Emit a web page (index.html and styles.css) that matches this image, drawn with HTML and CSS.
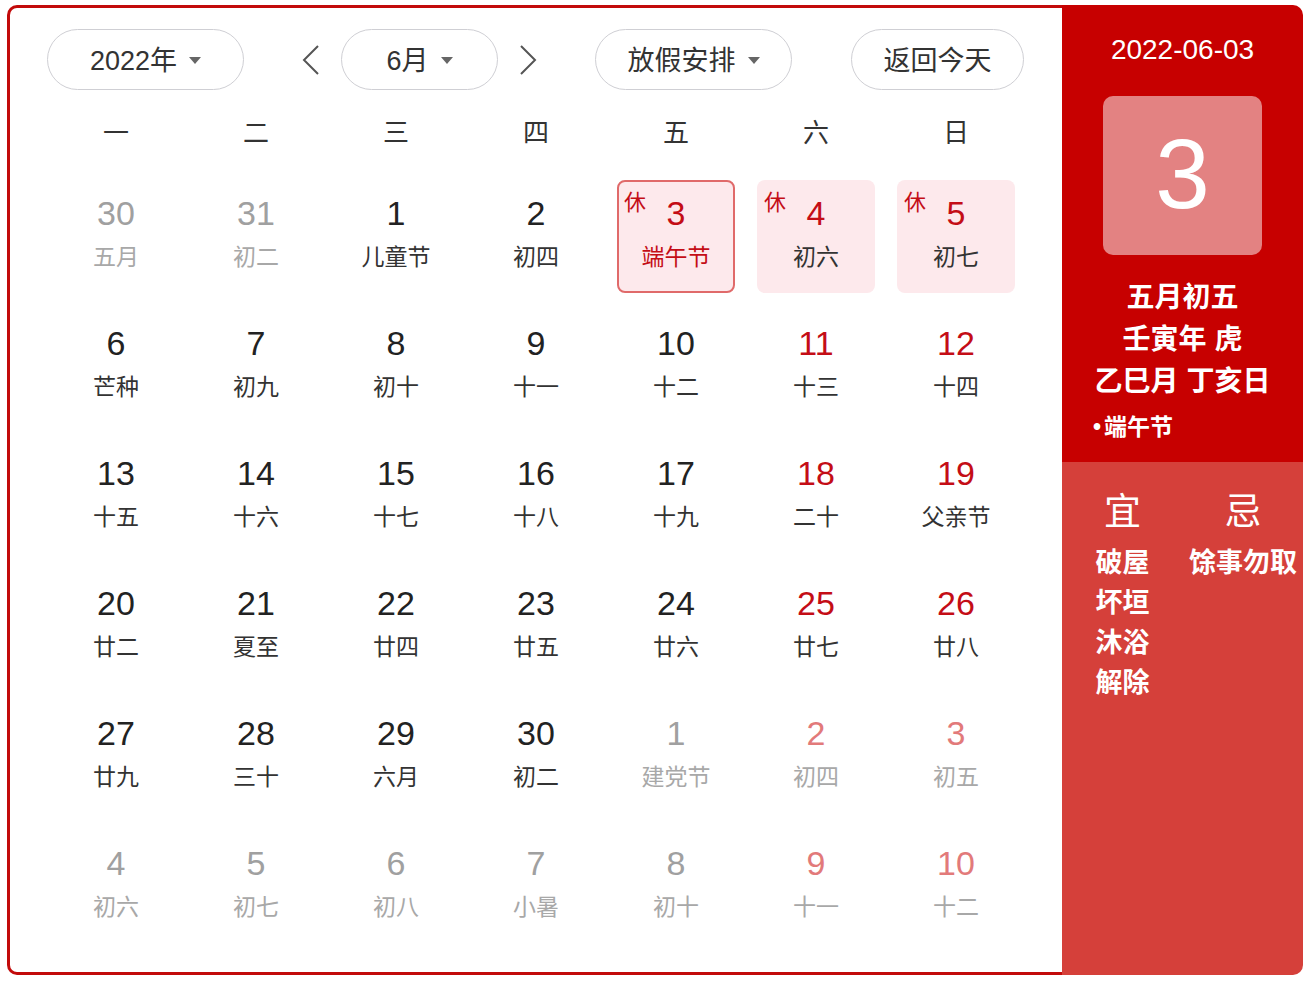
FILE: index.html
```html
<!DOCTYPE html>
<html lang="zh">
<head>
<meta charset="utf-8">
<link rel="stylesheet" href="styles.css">
</head>
<body>
<div class="card">
  <div class="main">
    <div class="toolbar">
      <div class="pill pill-year"><span>2022年</span><i class="caret"></i></div>
      <div class="arrow arrow-prev"><svg width="18" height="32" viewBox="0 0 18 32"><polyline points="16,2 2,16 16,30" fill="none" stroke="#555" stroke-width="2"/></svg></div>
      <div class="pill pill-month"><span>6月</span><i class="caret"></i></div>
      <div class="arrow arrow-next"><svg width="18" height="32" viewBox="0 0 18 32"><polyline points="2,2 16,16 2,30" fill="none" stroke="#555" stroke-width="2"/></svg></div>
      <div class="pill pill-holiday"><span>放假安排</span><i class="caret"></i></div>
      <div class="pill pill-today"><span>返回今天</span></div>
    </div>
    <div class="weekdays">
      <div>一</div><div>二</div><div>三</div><div>四</div><div>五</div><div>六</div><div>日</div>
    </div>
    <div class="grid">
      <div class="cell other"><div class="box"><div class="num">30</div><div class="lunar">五月</div></div></div>
      <div class="cell other"><div class="box"><div class="num">31</div><div class="lunar">初二</div></div></div>
      <div class="cell"><div class="box"><div class="num">1</div><div class="lunar">儿童节</div></div></div>
      <div class="cell"><div class="box"><div class="num">2</div><div class="lunar">初四</div></div></div>
      <div class="cell rest selected"><div class="box"><span class="tag">休</span><div class="num">3</div><div class="lunar">端午节</div></div></div>
      <div class="cell rest weekend"><div class="box"><span class="tag">休</span><div class="num">4</div><div class="lunar">初六</div></div></div>
      <div class="cell rest weekend"><div class="box"><span class="tag">休</span><div class="num">5</div><div class="lunar">初七</div></div></div>

      <div class="cell"><div class="box"><div class="num">6</div><div class="lunar">芒种</div></div></div>
      <div class="cell"><div class="box"><div class="num">7</div><div class="lunar">初九</div></div></div>
      <div class="cell"><div class="box"><div class="num">8</div><div class="lunar">初十</div></div></div>
      <div class="cell"><div class="box"><div class="num">9</div><div class="lunar">十一</div></div></div>
      <div class="cell"><div class="box"><div class="num">10</div><div class="lunar">十二</div></div></div>
      <div class="cell weekend"><div class="box"><div class="num">11</div><div class="lunar">十三</div></div></div>
      <div class="cell weekend"><div class="box"><div class="num">12</div><div class="lunar">十四</div></div></div>

      <div class="cell"><div class="box"><div class="num">13</div><div class="lunar">十五</div></div></div>
      <div class="cell"><div class="box"><div class="num">14</div><div class="lunar">十六</div></div></div>
      <div class="cell"><div class="box"><div class="num">15</div><div class="lunar">十七</div></div></div>
      <div class="cell"><div class="box"><div class="num">16</div><div class="lunar">十八</div></div></div>
      <div class="cell"><div class="box"><div class="num">17</div><div class="lunar">十九</div></div></div>
      <div class="cell weekend"><div class="box"><div class="num">18</div><div class="lunar">二十</div></div></div>
      <div class="cell weekend"><div class="box"><div class="num">19</div><div class="lunar">父亲节</div></div></div>

      <div class="cell"><div class="box"><div class="num">20</div><div class="lunar">廿二</div></div></div>
      <div class="cell"><div class="box"><div class="num">21</div><div class="lunar">夏至</div></div></div>
      <div class="cell"><div class="box"><div class="num">22</div><div class="lunar">廿四</div></div></div>
      <div class="cell"><div class="box"><div class="num">23</div><div class="lunar">廿五</div></div></div>
      <div class="cell"><div class="box"><div class="num">24</div><div class="lunar">廿六</div></div></div>
      <div class="cell weekend"><div class="box"><div class="num">25</div><div class="lunar">廿七</div></div></div>
      <div class="cell weekend"><div class="box"><div class="num">26</div><div class="lunar">廿八</div></div></div>

      <div class="cell"><div class="box"><div class="num">27</div><div class="lunar">廿九</div></div></div>
      <div class="cell"><div class="box"><div class="num">28</div><div class="lunar">三十</div></div></div>
      <div class="cell"><div class="box"><div class="num">29</div><div class="lunar">六月</div></div></div>
      <div class="cell"><div class="box"><div class="num">30</div><div class="lunar">初二</div></div></div>
      <div class="cell other"><div class="box"><div class="num">1</div><div class="lunar">建党节</div></div></div>
      <div class="cell other weekend"><div class="box"><div class="num">2</div><div class="lunar">初四</div></div></div>
      <div class="cell other weekend"><div class="box"><div class="num">3</div><div class="lunar">初五</div></div></div>

      <div class="cell other"><div class="box"><div class="num">4</div><div class="lunar">初六</div></div></div>
      <div class="cell other"><div class="box"><div class="num">5</div><div class="lunar">初七</div></div></div>
      <div class="cell other"><div class="box"><div class="num">6</div><div class="lunar">初八</div></div></div>
      <div class="cell other"><div class="box"><div class="num">7</div><div class="lunar">小暑</div></div></div>
      <div class="cell other"><div class="box"><div class="num">8</div><div class="lunar">初十</div></div></div>
      <div class="cell other weekend"><div class="box"><div class="num">9</div><div class="lunar">十一</div></div></div>
      <div class="cell other weekend"><div class="box"><div class="num">10</div><div class="lunar">十二</div></div></div>
    </div>
  </div>
  <div class="side">
    <div class="side-top">
      <div class="side-date">2022-06-03</div>
      <div class="side-day">3</div>
      <div class="side-lunar">
        <div>五月初五</div>
        <div>壬寅年 虎</div>
        <div>乙巳月 丁亥日</div>
      </div>
      <div class="side-fest"><span class="dot">•</span>端午节</div>
    </div>
    <div class="side-bottom">
      <div class="yj-col">
        <div class="yj-head">宜</div>
        <div class="yj-item">破屋</div>
        <div class="yj-item">坏垣</div>
        <div class="yj-item">沐浴</div>
        <div class="yj-item">解除</div>
      </div>
      <div class="yj-col">
        <div class="yj-head">忌</div>
        <div class="yj-item">馀事勿取</div>
      </div>
    </div>
  </div>
</div>
</body>
</html>
```

FILE: styles.css
```css
* { box-sizing: border-box; }
html, body { margin: 0; padding: 0; background: #fff; }
body {
  font-family: "Liberation Sans", "Noto Sans CJK SC", sans-serif;
  color: #333;
}
.card {
  display: flex;
  margin: 5px 0 0 7px;
  width: 1296px;
  height: 970px;
}
.main {
  width: 1055px;
  height: 970px;
  border: 3px solid #c20a0a;
  border-right: none;
  border-radius: 10px 0 0 10px;
  padding: 21px 36px 0 36px;
  background: #fff;
}
.toolbar {
  display: flex;
  align-items: center;
  height: 61px;
}
.pill {
  height: 61px;
  border: 1px solid #cfcfd4;
  border-radius: 31px;
  display: flex;
  align-items: center;
  justify-content: center;
  gap: 12px;
  font-size: 27px;
  color: #333;
  background: #fff;
  padding-bottom: 2px;
}
.caret {
  display: block;
  width: 0; height: 0;
  border-left: 6px solid transparent;
  border-right: 6px solid transparent;
  border-top: 7px solid #666;
  margin-top: 3px;
}
.pill-year { width: 197px; margin-left: 1px; }
.arrow { width: 18px; height: 32px; display: flex; }
.arrow-prev { margin-left: 58px; }
.pill-month { width: 157px; margin-left: 21px; }
.arrow-next { margin-left: 21px; }
.pill-holiday { width: 197px; margin-left: 58px; }
.pill-today { width: 173px; margin-left: 59px; }

.weekdays {
  display: grid;
  grid-template-columns: repeat(7, 140px);
  height: 81px;
  align-items: center;
  text-align: center;
  font-size: 26px;
  color: #333;
}
.grid {
  display: grid;
  grid-template-columns: repeat(7, 140px);
  grid-auto-rows: 130px;
}
.cell {
  display: flex;
  align-items: center;
  justify-content: center;
}
.box {
  position: relative;
  width: 118px;
  height: 113px;
  border-radius: 8px;
  padding-top: 13px;
  text-align: center;
}
.num {
  font-size: 34px;
  line-height: 40px;
  color: #222;
}
.lunar {
  margin-top: 9px;
  font-size: 23px;
  line-height: 30px;
  color: #333;
}
.weekend .num { color: #c40d16; }
.other .num { color: #a0a0a0; }
.other .lunar { color: #a8a8a8; }
.other.weekend .num { color: #e27a7a; }
.rest .box { background: #fde9ec; }
.rest .num { color: #c40d16; }
.selected .box { border: 2px solid #e06a6a; padding-top: 11px; }
.selected .lunar { color: #c40d16; }
.tag {
  position: absolute;
  left: 7px;
  top: 10px;
  font-size: 22px;
  line-height: 26px;
  color: #c40d16;
}
.selected .tag { left: 5px; top: 8px; }

.side {
  width: 241px;
  height: 970px;
  border-radius: 0 10px 10px 0;
  overflow: hidden;
  display: flex;
  flex-direction: column;
  color: #fff;
}
.side-top {
  height: 457px;
  background: #c70000;
  padding-top: 27px;
  display: flex;
  flex-direction: column;
  align-items: center;
}
.side-date {
  font-size: 28px;
  line-height: 36px;
}
.side-day {
  margin-top: 28px;
  width: 159px;
  height: 159px;
  border-radius: 10px;
  background: #e38282;
  display: flex;
  align-items: center;
  justify-content: center;
  font-size: 98px;
  line-height: 1;
  padding-bottom: 4px;
}
.side-lunar {
  margin-top: 22px;
  text-align: center;
  font-size: 28px;
  line-height: 42px;
  font-weight: 700;
}
.side-fest {
  align-self: flex-start;
  margin-top: 9px;
  padding-left: 31px;
  font-size: 23px;
  line-height: 30px;
  font-weight: 700;
}
.dot { margin-right: 3px; }
.side-bottom {
  flex: 1;
  background: #d5403a;
  display: flex;
  padding-top: 26px;
}
.yj-col {
  display: flex;
  flex-direction: column;
  align-items: center;
}
.yj-col:first-child { width: 121px; }
.yj-col:last-child { width: 120px; white-space: nowrap; }
.yj-head {
  font-size: 37px;
  line-height: 50px;
  margin-bottom: 5px;
}
.yj-item {
  font-size: 27px;
  line-height: 40px;
  font-weight: 700;
}
```
